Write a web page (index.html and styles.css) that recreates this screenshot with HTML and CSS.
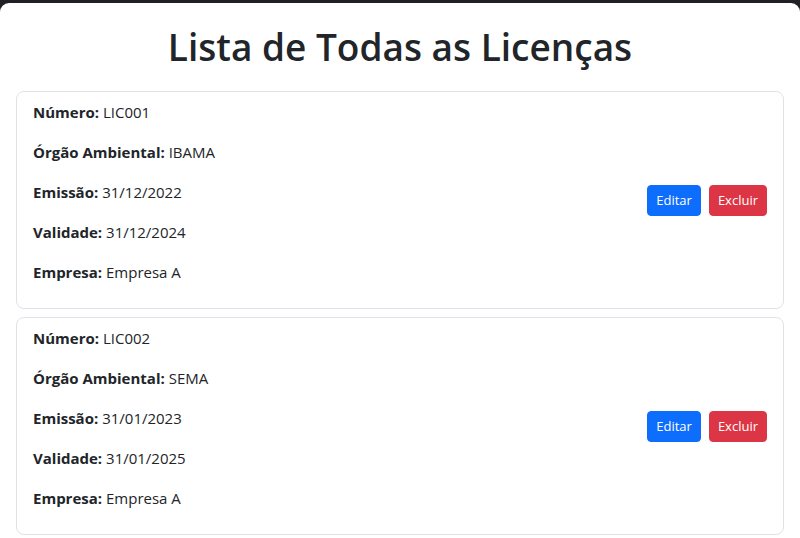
FILE: index.html
```html
<!DOCTYPE html>
<html lang="pt-BR">
<head>
<meta charset="utf-8">
<title>Lista de Todas as Licenças</title>
<link rel="stylesheet" href="styles.css">
</head>
<body>
<div class="page">
  <h1 class="title">Lista de Todas as Licenças</h1>
  <ul class="list">
    <li class="item">
      <div class="info">
        <p><strong>Número:</strong> LIC001</p>
        <p><strong>Órgão Ambiental:</strong> IBAMA</p>
        <p><strong>Emissão:</strong> 31/12/2022</p>
        <p><strong>Validade:</strong> 31/12/2024</p>
        <p><strong>Empresa:</strong> Empresa A</p>
      </div>
      <div class="actions">
        <button class="btn btn-primary">Editar</button>
        <button class="btn btn-danger">Excluir</button>
      </div>
    </li>
    <li class="item">
      <div class="info">
        <p><strong>Número:</strong> LIC002</p>
        <p><strong>Órgão Ambiental:</strong> SEMA</p>
        <p><strong>Emissão:</strong> 31/01/2023</p>
        <p><strong>Validade:</strong> 31/01/2025</p>
        <p><strong>Empresa:</strong> Empresa A</p>
      </div>
      <div class="actions">
        <button class="btn btn-primary">Editar</button>
        <button class="btn btn-danger">Excluir</button>
      </div>
    </li>
  </ul>
</div>
</body>
</html>
```

FILE: styles.css
```css
html {
  background: #202124;
}
body {
  margin: 0;
  padding-top: 3px;
  font-family: "Open Sans", "Noto Sans", sans-serif;
  font-size: 15px;
  line-height: 24px;
  color: #212529;
}
.page {
  background: #fff;
  border-radius: 9px 9px 0 0;
  min-height: 535px;
  padding: 20px 16px 0 16px;
  box-sizing: border-box;
  overflow: hidden;
}
.title {
  margin: 0 0 20px 0;
  text-align: center;
  font-size: 37px;
  line-height: 48px;
  font-weight: 600;
  color: #212529;
}
.list {
  list-style: none;
  margin: 0;
  padding: 0;
  display: flex;
  flex-direction: column;
  gap: 8px;
}
.item {
  display: flex;
  justify-content: space-between;
  align-items: center;
  border: 1px solid #dee2e6;
  border-radius: 8px;
  padding: 8px 16px;
}
.info p {
  margin: 0 0 16px 0;
}
.info strong {
  font-weight: 700;
}
.actions {
  display: flex;
  gap: 8px;
}
.btn {
  font-family: inherit;
  font-size: 13px;
  line-height: 21px;
  padding: 4px 8px;
  border: 1px solid transparent;
  border-radius: 4px;
  color: #fff;
  cursor: pointer;
}
.btn-primary {
  background: #0d6efd;
  border-color: #0d6efd;
}
.btn-danger {
  background: #dc3545;
  border-color: #dc3545;
}
```
